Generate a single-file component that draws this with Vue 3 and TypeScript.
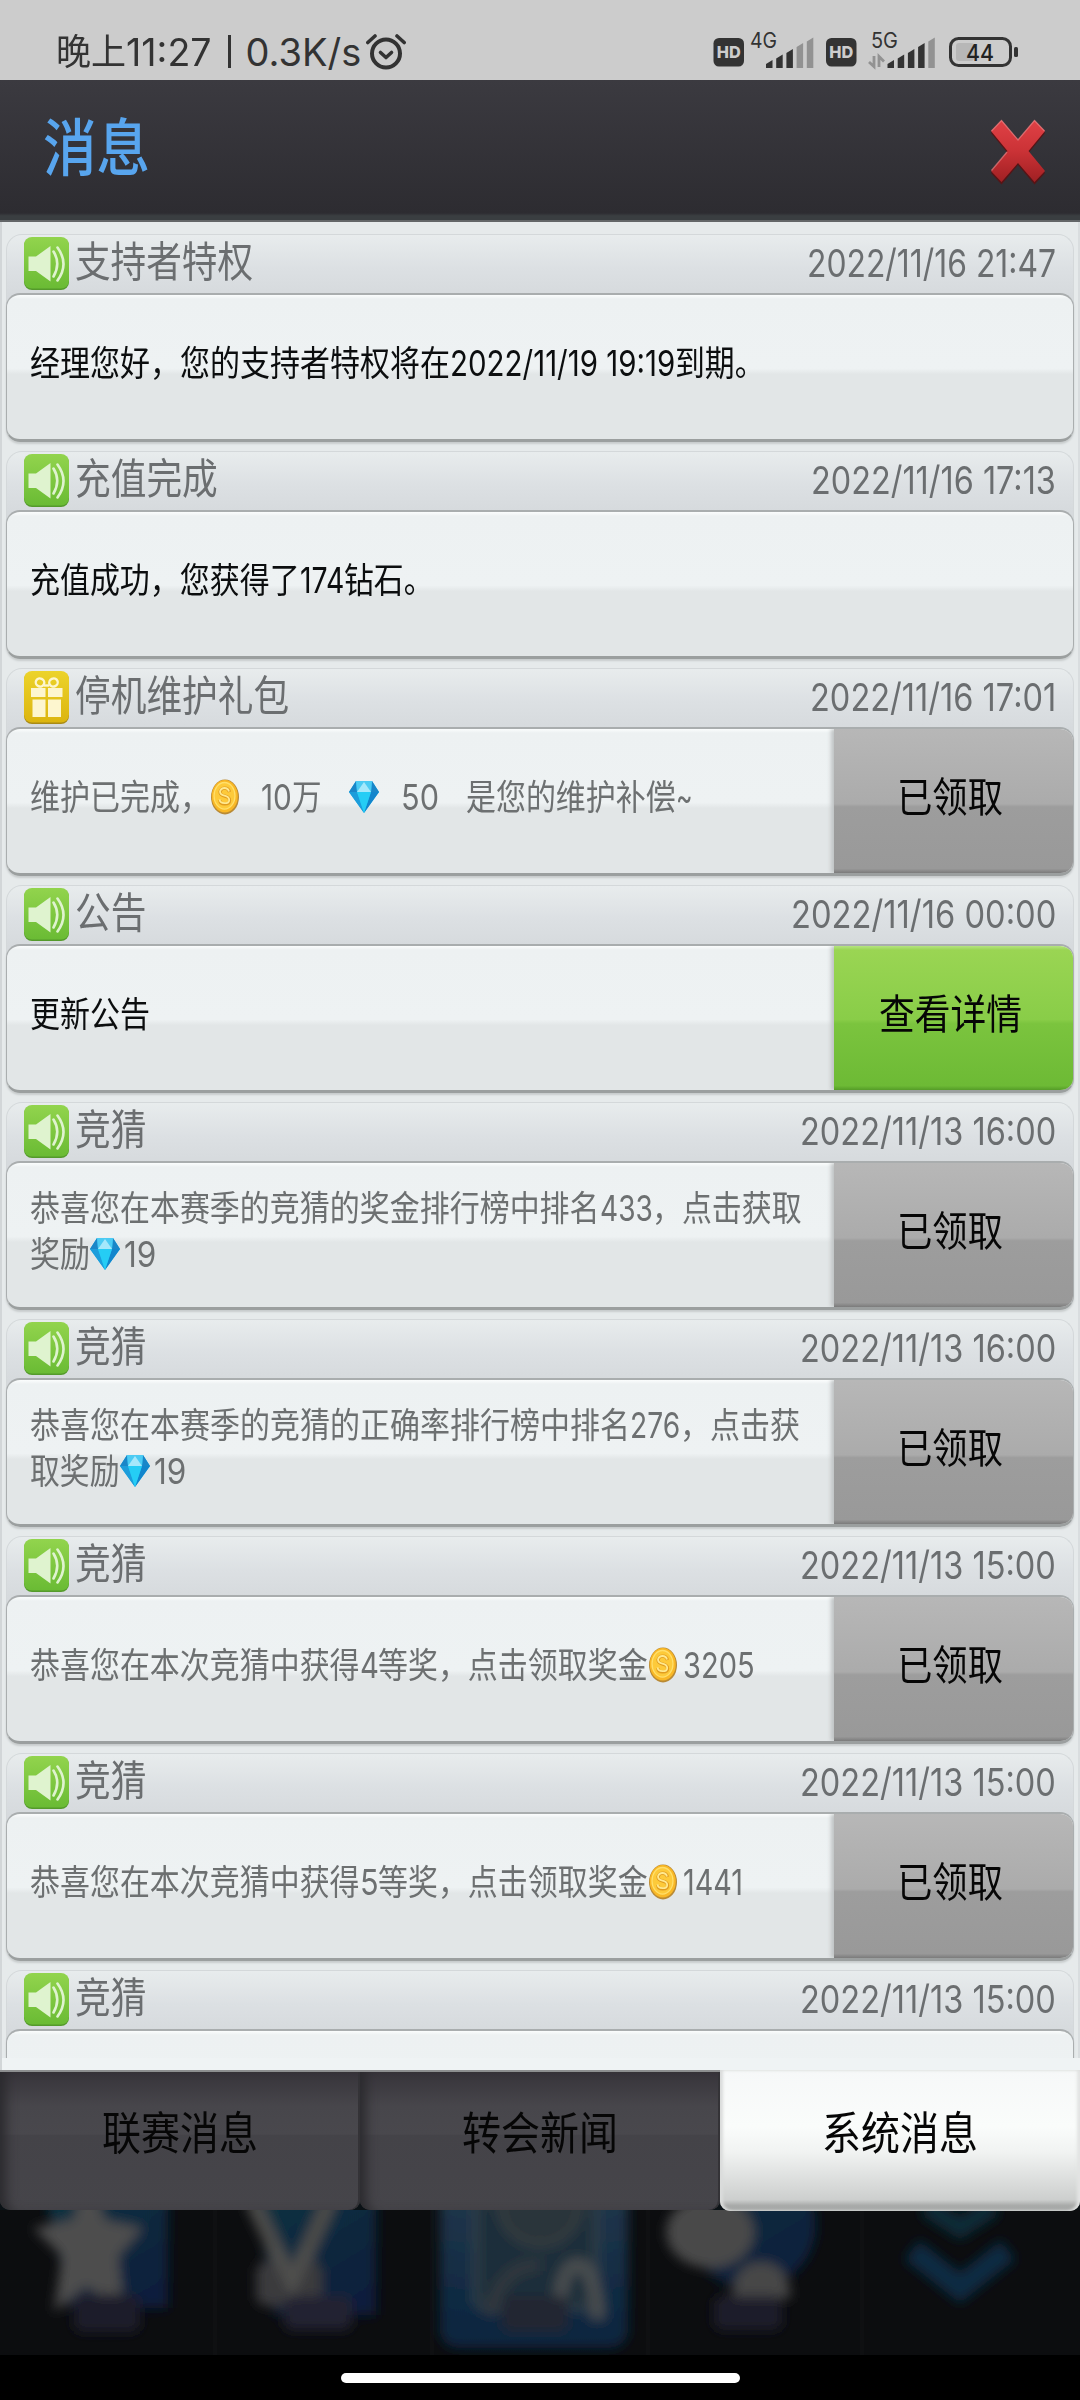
<script setup lang="ts">
import type { Directive } from 'vue'

type Segment = { t: string; w: number } | { icon: 'coin' | 'gem' } | { gap: number }

interface Message {
  kind: 'sound' | 'gift'
  title: string
  date: string
  dateWidth: number
  lines: Segment[][]
  unread?: boolean
  action?: 'claimed' | 'detail'
}

// Condenses a run of text horizontally so that it occupies the given width.
const vFit: Directive<HTMLElement, number> = {
  mounted(el, { value }) {
    const natural = el.offsetWidth
    if (!natural) return
    el.style.transform = `scaleX(${value / natural})`
    el.style.marginRight = `${value - natural}px`
  },
}

const CJK = 30
const c = (t: string): Segment => ({ t, w: t.length * CJK })
const n = (t: string, w: number): Segment => ({ t, w })
const gap = (px: number): Segment => ({ gap: px })
const coin: Segment = { icon: 'coin' }
const gem: Segment = { icon: 'gem' }

const messages: Message[] = [
  {
    kind: 'sound', title: '支持者特权', date: '2022/11/16 21:47', dateWidth: 249, unread: true,
    lines: [[c('经理您好，您的支持者特权将在'), n('2022/11/19 19:19', 225), c('到期。')]],
  },
  {
    kind: 'sound', title: '充值完成', date: '2022/11/16 17:13', dateWidth: 245, unread: true,
    lines: [[c('充值成功，您获得了'), n('174', 44), c('钻石。')]],
  },
  {
    kind: 'gift', title: '停机维护礼包', date: '2022/11/16 17:01', dateWidth: 246, action: 'claimed',
    lines: [[c('维护已完成，'), coin, gap(21), n('10', 31), c('万'), gap(28), gem, gap(22), n('50', 38), gap(27), c('是您的维护补偿'), n('~', 17)]],
  },
  {
    kind: 'sound', title: '公告', date: '2022/11/16 00:00', dateWidth: 265, unread: true, action: 'detail',
    lines: [[c('更新公告')]],
  },
  {
    kind: 'sound', title: '竞猜', date: '2022/11/13 16:00', dateWidth: 256, action: 'claimed',
    lines: [
      [c('恭喜您在本赛季的竞猜的奖金排行榜中排名'), n('433', 53), c('，点击获取')],
      [c('奖励'), gem, gap(4), n('19', 32)],
    ],
  },
  {
    kind: 'sound', title: '竞猜', date: '2022/11/13 16:00', dateWidth: 256, action: 'claimed',
    lines: [
      [c('恭喜您在本赛季的竞猜的正确率排行榜中排名'), n('276', 50), c('，点击获')],
      [c('取奖励'), gem, gap(4), n('19', 32)],
    ],
  },
  {
    kind: 'sound', title: '竞猜', date: '2022/11/13 15:00', dateWidth: 256, action: 'claimed',
    lines: [[c('恭喜您在本次竞猜中获得'), n('4', 19), c('等奖，点击领取奖金'), coin, gap(5), n('3205', 72)]],
  },
  {
    kind: 'sound', title: '竞猜', date: '2022/11/13 15:00', dateWidth: 256, action: 'claimed',
    lines: [[c('恭喜您在本次竞猜中获得'), n('5', 19), c('等奖，点击领取奖金'), coin, gap(5), n('1441', 60)]],
  },
  {
    kind: 'sound', title: '竞猜', date: '2022/11/13 15:00', dateWidth: 256,
    lines: [[]],
  },
]

const tabs = [
  { label: '联赛消息', active: false },
  { label: '转会新闻', active: false },
  { label: '系统消息', active: true },
]

const bars = [8, 13.5, 19, 25, 30.5]
</script>

<template>
  <div class="screen">
    <svg class="defs" width="0" height="0" aria-hidden="true">
      <defs>
        <linearGradient id="green" x1="0" y1="0" x2="0" y2="1">
          <stop offset="0" stop-color="#92d44d" /><stop offset="1" stop-color="#6abb34" />
        </linearGradient>
        <linearGradient id="yellow" x1="0" y1="0" x2="0" y2="1">
          <stop offset="0" stop-color="#ecd32b" /><stop offset="1" stop-color="#dcb50f" />
        </linearGradient>
        <linearGradient id="red" x1="0" y1="0" x2="0" y2="1">
          <stop offset="0" stop-color="#e04146" /><stop offset=".5" stop-color="#cb3236" /><stop offset="1" stop-color="#a02023" />
        </linearGradient>
        <symbol id="sound" viewBox="0 0 45 53">
          <rect x="0" y="1" width="45" height="52" rx="8" fill="#549a2b" />
          <rect x="0" y="0" width="45" height="51.5" rx="8" fill="url(#green)" />
          <path d="M4.5 19.500h7.500L26.500 9v35.500L12 34H4.500z" fill="#dff3cf" />
          <path d="M29.500 14.500q7.500 12 0 25M33.500 10.500q12 16.500 0 33" fill="none" stroke="#dff3cf" stroke-width="2.600" stroke-linecap="round" />
        </symbol>
        <symbol id="gift" viewBox="0 0 45 53">
          <rect x="0" y="1" width="45" height="52" rx="8" fill="#a98b16" />
          <rect x="0" y="0" width="45" height="51.500" rx="8" fill="url(#yellow)" />
          <g fill="#fdf6cf">
            <rect x="7" y="17" width="14.500" height="9" /><rect x="24" y="17" width="14.500" height="9" />
            <rect x="8.500" y="28.500" width="13" height="17.500" /><rect x="24" y="28.500" width="13" height="17.500" />
          </g>
          <g fill="none" stroke="#fdf6cf" stroke-width="2.400">
            <ellipse cx="16" cy="11.500" rx="4.300" ry="4" transform="rotate(25 16 11.500)" />
            <ellipse cx="29.500" cy="11.500" rx="4.300" ry="4" transform="rotate(-25 29.500 11.500)" />
            <path d="M20 14.500h5" />
          </g>
        </symbol>
        <symbol id="coin" viewBox="0 0 30 36">
          <ellipse cx="15" cy="18" rx="14" ry="17.500" fill="#b98a35" />
          <ellipse cx="14.800" cy="17.300" rx="13" ry="16.300" fill="#f9b826" />
          <ellipse cx="14.500" cy="16.800" rx="10.500" ry="13.300" fill="#fdca3a" stroke="#ffdf6a" stroke-width="1.300" />
          <path d="M19.500 13q-1-3.800-4.700-3.800t-4.800 3.600q0 3.300 4.800 4.300t4.800 4.400q0 3.500-4.800 3.500t-5-3.800" fill="none" stroke="#e09c20" stroke-width="3.200" />
          <path d="M19 12.500q-1-3.500-4.500-3.500t-4.500 3.400q0 3.200 4.500 4.200t4.700 4.300q0 3.300-4.700 3.300t-4.800-3.600" fill="none" stroke="#ffe98f" stroke-width="1.800" />
        </symbol>
        <symbol id="gem" viewBox="0 0 30 34">
          <path d="M7 1h16l7 11-15 21L0 12z" fill="#19b4ea" />
          <path d="M7 1 0 12h8zM23 1l7 11h-8z" fill="#1a86c8" />
          <path d="M7 1h16l-1 11H8z" fill="#4ccbf3" />
          <path d="M15 2 8 12h14z" fill="#a5e8fb" />
          <path d="M0 12h8l7 21z" fill="#1d9ddb" />
          <path d="M30 12h-8l-7 21z" fill="#1285cc" />
          <path d="M8 12h14l-7 21z" fill="#25cdf5" />
        </symbol>
      </defs>
    </svg>

    <div class="status">
      <div class="clock">
        <span v-fit="70">晚上</span><span v-fit="86">11:27</span><i class="bar" /><span v-fit="116">0.3K/s</span>
        <svg class="alarm" width="40" height="38" viewBox="0 0 40 38" fill="none" stroke="#333" stroke-linecap="round" stroke-linejoin="round">
          <circle cx="20" cy="20.500" r="14" stroke-width="4" />
          <path d="M1.800 9.500 9 3M38.200 9.500 31 3" stroke-width="3.600" />
          <path d="m14.500 19.500 5.500 5 5.500-5" stroke-width="3.600" />
        </svg>
      </div>
      <svg class="radio" width="310" height="60" viewBox="712 16 310 60">
        <g v-for="x in [713.5, 826]" :key="x">
          <rect :x="x" y="38" width="30.500" height="28.500" rx="5.500" fill="#333" />
          <text :x="x + 15.300" y="58.300" text-anchor="middle" textLength="24" lengthAdjust="spacingAndGlyphs" font-size="16.500" font-weight="800" fill="#ccc">HD</text>
        </g>
        <text x="750" y="48" font-size="21" textLength="27" lengthAdjust="spacingAndGlyphs" fill="#333">4G</text>
        <text x="871" y="48" font-size="21" textLength="27" lengthAdjust="spacingAndGlyphs" fill="#333">5G</text>
        <g v-for="(h, i) in bars" :key="i">
          <path :d="`M${766 + i * 10.2} 68v-${h - 4}l6.500-4v${h}z`" :fill="i < 3 ? '#333' : '#929292'" />
          <path :d="`M${887.5 + i * 10.2} 68v-${h - 4}l6.500-4v${h}z`" :fill="i < 4 ? '#333' : '#929292'" />
        </g>
        <path d="M874 56v10.500l-5-4.500M879 67V56.500l5 5" fill="none" stroke="#929292" stroke-width="2.800" />
        <rect x="956" y="43" width="18" height="18" rx="3" fill="#b7b7b7" />
        <rect x="950.500" y="38.500" width="60" height="27" rx="8" fill="none" stroke="#333" stroke-width="3" />
        <rect x="1014" y="47" width="4" height="10" rx="1.500" fill="#333" />
        <text x="966" y="61" font-size="23.500" font-weight="500" textLength="28" lengthAdjust="spacingAndGlyphs" fill="#222">44</text>
      </svg>
    </div>

    <header class="topbar">
      <h1><span v-fit="107">消息</span></h1>
      <svg class="close" width="56" height="66" viewBox="0 0 56 66">
        <path d="M11.500 3 28 22.500 44.500 3 55 14 38.500 34 55 54 44.500 65.500 28 46 11.500 65.500 1 54 17.500 34 1 14z" fill="#571416" />
        <path d="M11.500 1 28 20.500 44.500 1 55 12 38.500 32 55 52 44.500 63 28 44 11.500 63 1 52 17.500 32 1 12z" fill="url(#red)" />
        <path d="M1.500 12 11.500 1.500 28 21 44.500 1.500l10 10.500M17 33 1.500 51.500" fill="none" stroke="#e98a8c" stroke-width="1.400" opacity=".6" />
      </svg>
    </header>

    <main class="list">
      <article v-for="(m, i) in messages" :key="i" class="item">
        <div class="head">
          <svg class="kind" width="45" height="53"><use :href="'#' + m.kind" /></svg>
          <h2><span v-fit="m.title.length * 35.7">{{ m.title }}</span></h2>
          <time><span v-fit="m.dateWidth">{{ m.date }}</span></time>
        </div>
        <div class="card">
          <div class="body" :class="{ unread: m.unread }">
            <p v-for="(line, j) in m.lines" :key="j">
              <template v-for="(s, k) in line" :key="k">
                <span v-if="'t' in s" v-fit="s.w">{{ s.t }}</span>
                <i v-else-if="'gap' in s" :style="{ width: s.gap + 'px' }" />
                <svg v-else class="token" width="30" height="36"><use :href="'#' + s.icon" /></svg>
              </template>
            </p>
          </div>
          <button v-if="m.action === 'claimed'" class="action claimed"><span v-fit="106">已领取</span></button>
          <button v-else-if="m.action === 'detail'" class="action detail"><span v-fit="143">查看详情</span></button>
        </div>
      </article>
    </main>
    <div class="strip" />

    <nav class="tabs">
      <button v-for="t in tabs" :key="t.label" class="tab" :class="{ active: t.active }">
        <span v-fit="156">{{ t.label }}</span>
      </button>
    </nav>

    <svg class="dock" width="1080" height="145" viewBox="0 2210 1080 145">
      <defs>
        <filter id="soft" x="-20%" y="-20%" width="140%" height="140%"><feGaussianBlur stdDeviation="6" /></filter>
        <linearGradient id="blue" x1="0" y1="0" x2=".6" y2="1">
          <stop offset="0" stop-color="#0a3340" /><stop offset="1" stop-color="#071f3d" />
        </linearGradient>
        <linearGradient id="frame" x1="0" y1="0" x2="0" y2="1">
          <stop offset="0" stop-color="#26394c" /><stop offset="1" stop-color="#07243f" />
        </linearGradient>
      </defs>
      <rect x="0" y="2210" width="1080" height="145" fill="#0c0d0f" />
      <path d="M215 2210v145M432 2210v145M648 2210v145M862 2210v145" stroke="#0f1012" stroke-width="4" />
      <g filter="url(#soft)">
        <path d="M45 2195h123v113H70z" fill="url(#blue)" />
        <path d="m88 2170 17 50 38 8-25 28 6 54-38-24-32 26 8-56-29-28 40-8z" fill="#4e4e4e" />
        <rect x="74" y="2294" width="66" height="38" rx="8" fill="#1d1d2a" />
        <path d="M255 2195h121v120H275z" fill="url(#blue)" />
        <path d="m252 2200 40 84 38-84" fill="none" stroke="#4b4b49" stroke-width="16" />
        <rect x="256" y="2262" width="66" height="44" rx="10" fill="#3a3a3c" />
        <path d="m276 2250 16 34 15-34" fill="none" stroke="#50504e" stroke-width="12" />
        <rect x="284" y="2296" width="68" height="34" rx="8" fill="#222330" />
        <rect x="440" y="2170" width="188" height="178" rx="18" fill="url(#frame)" />
        <rect x="476" y="2180" width="120" height="128" rx="10" fill="#1d2e3b" stroke="#333f49" stroke-width="6" />
        <circle cx="540" cy="2205" r="40" fill="#2c353b" stroke="#3b4043" stroke-width="5" />
        <path d="M490 2315q10-50 50-50" fill="none" stroke="#32373e" stroke-width="12" />
        <path d="M560 2304q2-39 18-39t20 54" fill="none" stroke="#4a4e50" stroke-width="14" />
        <rect x="502" y="2296" width="66" height="36" rx="8" fill="#242733" />
        <circle cx="752" cy="2225" r="64" fill="url(#blue)" />
        <ellipse cx="710" cy="2232" rx="44" ry="36" fill="#4a4a4a" />
        <path d="M732 2298q2-36 29-36t30 36z" fill="#474747" />
        <rect x="714" y="2296" width="68" height="34" rx="8" fill="#1f1f2b" />
        <path d="m926 2206 34 22 34-22" fill="none" stroke="#0a2c37" stroke-width="20" />
        <path d="m912 2250 48 38 48-38" fill="none" stroke="#0a2b43" stroke-width="24" />
      </g>
    </svg>

    <footer class="gesture"><i /></footer>
  </div>
</template>

<style>
body { background: #000; }
</style>

<style scoped>
.screen {
  width: 1080px;
  height: 2400px;
  overflow: hidden;
  display: flex;
  flex-direction: column;
  background: #000;
  font-family: Inter, "Noto Sans CJK SC", sans-serif;
}
.defs { display: block; flex: none; height: 0; }
span {
  display: inline-block;
  white-space: pre;
  transform-origin: 0 50%;
  flex: none;
}
svg, i { flex: none; display: block; }
h1, h2, p { margin: 0; font-weight: 400; }
button { border: 0; font: inherit; color: #060606; padding: 0; margin: 0; }

.status {
  flex: none;
  height: 80px;
  box-sizing: border-box;
  padding: 16px 58px 0 56px;
  background: #ccc;
  display: flex;
  justify-content: space-between;
}
.clock { display: flex; height: 42px; margin-top: 15px; line-height: 42px; font-size: 38px; color: #333; }
.clock span:first-child { font-size: 36px; }
.bar { width: 3px; height: 33px; background: #333; margin: 4px 15px 0 16px; }
.alarm { margin: 2px 0 0 5px; }

.topbar {
  flex: none;
  height: 142px;
  box-sizing: border-box;
  padding: 0 34px 8px 43px;
  border-bottom: 2px solid #636668;
  background: linear-gradient(#3b3a40, #2d2c31 95%, #3a3e41 97%);
  display: flex;
  align-items: center;
  justify-content: space-between;
}
h1 { font-size: 62px; line-height: 70px; color: #58a5ee; font-weight: 500; display: flex; margin-top: 5px; }
.close { margin-top: 11px; }

.list {
  flex: none;
  height: 1836px;
  box-sizing: border-box;
  overflow: hidden;
  padding: 12px 6px 0;
  background: #e6eaeb;
  box-shadow: inset 2px 0 #d2d6d8, inset -2px 0 #d9dddf;
}
.item { height: 217px; }
.head {
  height: 74px;
  margin-bottom: -15px;
  box-sizing: border-box;
  padding: 2px 17px 0 17px;
  border: 1px solid #d4d8da;
  border-bottom: 0;
  border-radius: 16px 16px 0 0;
  background: linear-gradient(#e8eced, #dce0e3 45%, #d6dadd 82%);
  display: flex;
  align-items: flex-start;
  color: #6b6e70;
}
h2 { flex: 1; margin-left: 6px; font-size: 42.500px; line-height: 50px; display: flex; }
time { display: flex; font-size: 38.500px; line-height: 53px; }

.card {
  position: relative;
  height: 149px;
  box-sizing: border-box;
  border: 1px solid #a7abac;
  border-width: 2px 1px 3px;
  border-color: #a9adae #aaaeaf #9b9f9f;
  border-radius: 14px;
  overflow: hidden;
  display: flex;
  background: linear-gradient(#fbfdfd, #edf1f2 4px, #eef2f3 51%, #e2e6e7 55%, #e2e6e7);
  box-shadow: 0 2px 2px #c8cccd;
}
.body {
  flex: 1;
  min-width: 0;
  padding: 0 0 6px 23px;
  display: flex;
  flex-direction: column;
  justify-content: center;
  font-size: 35.500px;
  color: #6d7071;
}
.body.unread { color: #0c0e0f; }
p { display: flex; height: 46px; line-height: 46px; }
.token { margin-top: 4px; }

.action {
  flex: none;
  width: 239px;
  box-sizing: border-box;
  display: flex;
  align-items: center;
  justify-content: center;
  padding: 0 7px 9px 0;
  font-size: 41px;
  line-height: 50px;
  box-shadow: -3px 0 4px #bfc3c4;
}
.claimed { background: linear-gradient(#b7b7b7, #ababab 52%, #9d9d9d 54%, #999 97%, #7b7b7b); }
.detail { background: linear-gradient(#b5e47f, #9ad553 4px, #89cd48 51%, #7bc43e 54%, #6dba35 97%, #559c28); }

.strip { flex: none; height: 12px; background: #eff3f4; box-shadow: inset 2px 0 #d2d6d8; }

.tabs { flex: none; height: 140px; display: flex; background: #0b1216; }
.tab {
  flex: 1;
  height: 140px;
  box-sizing: border-box;
  padding: 0 0 14px 1px;
  display: flex;
  align-items: center;
  justify-content: center;
  font-size: 45px;
  line-height: 60px;
  border-top: 2px solid #8d8f90;
  border-radius: 0 0 10px 10px;
  background: linear-gradient(#37343a, #47464b 25%, #49484d 45%, #444348 46%, #46454a);
  box-shadow: inset 12px 0 12px -6px #2b2a2e, inset -2px 0 #343337;
}
.tab.active {
  border-top: 0;
  height: 141px;
  padding-bottom: 13px;
  background: linear-gradient(#f6f8f8, #fafcfb 40%, #f1f3f2 58%, #cdcfce 92%, #a9abaa 96%, #a3a5a4);
  box-shadow: inset 3px 0 3px #dadcdb, inset -3px 0 3px #e2e4e3;
  position: relative;
}

.dock { flex: none; }
.gesture { flex: none; height: 45px; background: #000; display: flex; justify-content: center; }
.gesture i { width: 399px; height: 10px; margin-top: 18px; border-radius: 5px; background: #fff; }
</style>
